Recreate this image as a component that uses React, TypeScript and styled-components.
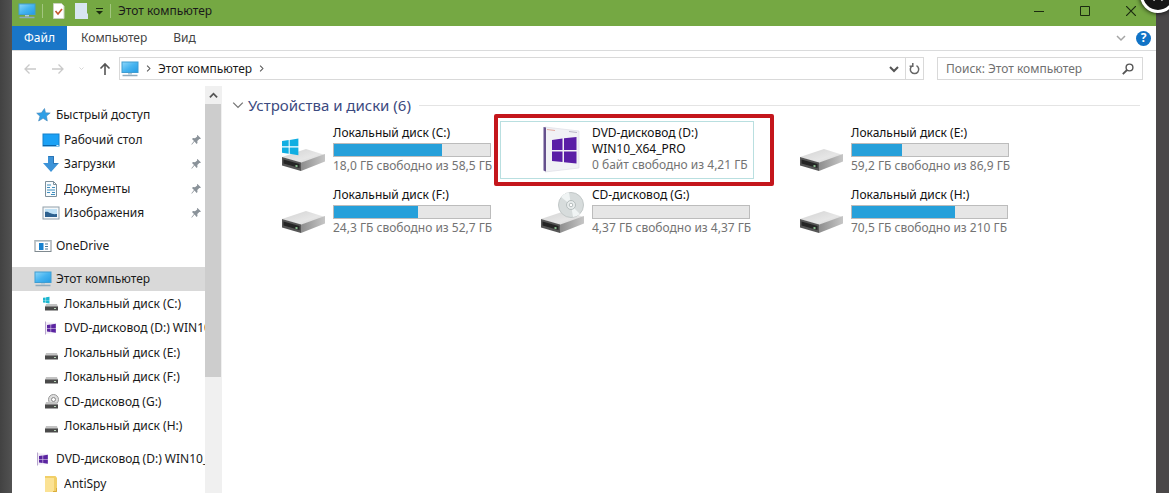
import React from "react";
import styled, { createGlobalStyle } from "styled-components";

const GlobalStyle = createGlobalStyle`
  * { box-sizing: border-box; }
  body {
    margin: 0;
    overflow: hidden;
    background: #484647;
    font: 12px/16px "Noto Sans", "Open Sans", sans-serif;
    color: #1a1a1a;
  }
  button, input { font: inherit; color: inherit; }
  svg { display: block; flex: none; }
`;

const Page = styled.div`
  position: relative;
  height: 100vh;
  padding: 0 13px 0 12px;
  background: linear-gradient(90deg, #424242, #525252 12px, #4a4748 12px);
`;

const Window = styled.div`
  display: flex;
  flex-direction: column;
  height: 100%;
  background: #fff;
`;

const PlainButton = styled.button`
  display: flex;
  align-items: center;
  justify-content: center;
  padding: 0;
  border: 0;
  background: none;
`;

const TitleBar = styled.header`
  display: flex;
  align-items: center;
  flex: none;
  height: 26px;
  padding: 0 2px 4px 6px;
  background: #75a843;
`;

const Divider = styled.span`
  width: 1px;
  height: 14px;
  background: #a3c680;
`;

const QuickTools = styled.div`
  display: flex;
  align-items: center;
  gap: 6px;
`;

const Title = styled.h1`
  flex: 1;
  margin: 0 0 0 7px;
  font-size: 12px;
  font-weight: 400;
`;

const CaptionButton = styled(PlainButton)`
  width: 46px;
  height: 22px;
`;

const Ribbon = styled.nav`
  display: flex;
  align-items: center;
  flex: none;
  height: 25px;
  padding-right: 5px;
  border-bottom: 1px solid #dadbdc;
`;

const FileTab = styled(PlainButton)`
  width: 55px;
  height: 24px;
  background: #1976c8;
  color: #fff;
`;

const Tab = styled(PlainButton)`
  height: 24px;
  padding: 0 12px 0 14px;
  color: #444;
`;

const Spacer = styled.span`
  flex: 1;
`;

const HelpButton = styled(PlainButton)`
  width: 15px;
  height: 15px;
  margin-left: 10px;
  border-radius: 50%;
  background: #1173c6;
  color: #fff;
  font-size: 12px;
  font-weight: 700;
  line-height: 14px;
`;

const AddressRow = styled.div`
  display: flex;
  align-items: center;
  flex: none;
  height: 35px;
  padding: 0 13px 0 11px;
`;

const NavButtons = styled.div`
  display: flex;
  align-items: center;
  gap: 14px;
  padding-right: 7px;
`;

const AddressBar = styled.div`
  display: flex;
  align-items: center;
  flex: 1;
  height: 23px;
  border: 1px solid #d9d9d9;
  padding-left: 1px;
  gap: 6px;
`;

const Refresh = styled(PlainButton)`
  width: 18px;
  height: 21px;
  border-left: 1px solid #d9d9d9;
`;

const SearchBox = styled.label`
  display: flex;
  align-items: center;
  width: 206px;
  height: 23px;
  margin-left: 13px;
  padding: 0 8px;
  border: 1px solid #d9d9d9;
`;

const SearchInput = styled.input`
  flex: 1;
  min-width: 0;
  padding: 0;
  border: 0;
  outline: 0;
  background: none;
  &::placeholder { color: #707070; opacity: 1; }
`;

const Body = styled.div`
  display: flex;
  flex: 1;
  min-height: 0;
`;

const Sidebar = styled.aside`
  display: flex;
  width: 210px;
  flex: none;
  border-right: 1px solid #f0f0f0;
`;

const Tree = styled.div`
  flex: 1;
  min-width: 0;
  padding-top: 17px;
  overflow: hidden;
`;

const Group = styled.ul<{ $height?: number }>`
  display: flex;
  flex-direction: column;
  justify-content: space-between;
  min-height: ${(p) => p.$height ?? 24}px;
  margin: 0 0 9px;
  padding: 0;
  list-style: none;
`;

const TreeRow = styled.li<{ $nested?: boolean; $selected?: boolean }>`
  display: flex;
  align-items: center;
  gap: 4px;
  height: 24px;
  padding-left: ${(p) => (p.$nested ? 30 : 22)}px;
  background: ${(p) => (p.$selected ? "#d9d9d9" : "transparent")};
`;

const TreeLabel = styled.span`
  flex: 1;
  overflow: hidden;
  white-space: nowrap;
`;

const PinSlot = styled.span`
  padding-right: 3px;
`;

const ScrollBar = styled.div`
  display: flex;
  flex-direction: column;
  width: 16px;
  background: #f0f0f0;
`;

const ScrollArrow = styled(PlainButton)`
  height: 18px;
`;

const ScrollThumb = styled.div`
  height: 67%;
  background: #cdcdcd;
`;

const Main = styled.main`
  flex: 1;
  min-width: 0;
  padding: 9px 16px 0 10px;
`;

const SectionHead = styled.div`
  display: flex;
  align-items: center;
  gap: 4px;
  height: 20px;
`;

const SectionTitle = styled.h2`
  margin: 0;
  color: #3c4a80;
  font-size: 15px;
  font-weight: 400;
  line-height: 20px;
`;

const Rule = styled.span`
  flex: 1;
  height: 1px;
  margin-left: 4px;
  background: #e4e4e4;
`;

const DriveGrid = styled.div`
  display: grid;
  grid-template-columns: repeat(auto-fill, 254px);
  gap: 4px 5px;
  padding: 6px 0 0 9px;
`;

const Tile = styled.article<{ $marked?: boolean }>`
  position: relative;
  display: flex;
  gap: 6px;
  height: 58px;
  padding: 3px 4px 0 39px;
  border: 1px solid ${(p) => (p.$marked ? "#b9dfe0" : "transparent")};

  &::after {
    content: "";
    display: ${(p) => (p.$marked ? "block" : "none")};
    position: absolute;
    inset: -8px -21px -8px -7px;
    border: 4px solid #c4161c;
    border-radius: 2px;
  }
`;

const TileText = styled.div`
  width: 158px;
  white-space: nowrap;
`;

const DriveName = styled.h3`
  margin: 0;
  font-size: 12px;
  font-weight: 400;
  line-height: 16px;
  color: #111;
`;

const Meter = styled.div`
  height: 14px;
  margin: 2px 0 1px;
  border: 1px solid #bcbcbc;
  background: #e6e6e6;
`;

const MeterFill = styled.div`
  height: 12px;
  background: #26a0da;
`;

const Space = styled.p`
  margin: 0;
  color: #737373;
`;

const OverlayClose = styled(PlainButton)`
  position: absolute;
  top: -23px;
  right: -7px;
  width: 36px;
  height: 36px;
  border: 3px solid #fff;
  border-radius: 50%;
  background: #151515;
  box-shadow: 0 0 5px #000;
`;

const PcIcon = () => (
  <svg width="18" height="16" viewBox="0 0 18 16">
    <defs>
      <linearGradient id="screen" x1="0" y1="0" x2="1" y2="1">
        <stop offset="0" stopColor="#8fd8fb" />
        <stop offset=".5" stopColor="#46b4f0" />
        <stop offset="1" stopColor="#249be3" />
      </linearGradient>
    </defs>
    <rect x="1" y="1" width="16" height="10.500" fill="url(#screen)" stroke="#3f9dd2" />
    <path d="M7 12h4v1.500H7z" fill="#b7cbd6" />
    <path d="M1.500 14.500h15" stroke="#8eaabc" strokeWidth="1.500" />
  </svg>
);

const Chevron = ({ dir, size = 8, color = "#555", weight = 1.5 }: { dir: "up" | "down" | "right"; size?: number; color?: string; weight?: number }) => {
  const d = { up: "M1 7l4-4 4 4", down: "M1 3l4 4 4-4", right: "M3 1l4 4-4 4" }[dir];
  return (
    <svg width={size} height={size} viewBox="0 0 10 10" fill="none" stroke={color} strokeWidth={weight}>
      <path d={d} />
    </svg>
  );
};

const Arrow = ({ turn = 0, color = "#c9c9c9", weight = 1.3 }: { turn?: number; color?: string; weight?: number }) => (
  <svg width="14" height="14" viewBox="0 0 14 14" fill="none" stroke={color} strokeWidth={weight}>
    <path transform={`rotate(${turn} 7 7)`} d="M13 7H2M6.500 2.500L2 7l4.500 4.500" />
  </svg>
);

const StarIcon = () => (
  <svg width="18" height="16" viewBox="0 0 18 16">
    <path d="M10.500 1.500l1 4.300 4.700.2-3.700 3 .8 5-4.200-2.700L4.600 14l1.400-4.800L2.700 6.200l4.700-.4z" fill="#2f9fe6" stroke="#4586b8" strokeWidth=".6" />
  </svg>
);

const DesktopIcon = () => (
  <svg width="18" height="16" viewBox="0 0 18 16">
    <rect x="1" y="2" width="16" height="12" fill="#1ba1f5" stroke="#1682cb" />
    <path d="M1 13.500h13" stroke="#0b64a8" />
    <path d="M14.500 13.500h2" stroke="#d9f0ff" />
  </svg>
);

const DownloadIcon = () => (
  <svg width="18" height="16" viewBox="0 0 18 16">
    <path d="M6 0h6v7h5l-8 9-8-9h5z" fill="#3c93d8" />
    <path d="M6.500 .5h5v7h4" fill="none" stroke="#2b74b5" />
  </svg>
);

const DocumentIcon = () => (
  <svg width="18" height="16" viewBox="0 0 18 16">
    <path d="M3.500 .5h8l3 3v12h-11z" fill="#f8fbfd" stroke="#7c8f9b" />
    <path d="M5 4h4M5 6.500h3m2 0h3M5 9h8M5 11.500h3m2 0h3M9 13.500h4" stroke="#3f8fc0" strokeWidth="1.200" />
    <path d="M11.500 .5v3h3" fill="none" stroke="#7c8f9b" />
  </svg>
);

const PictureIcon = () => (
  <svg width="18" height="16" viewBox="0 0 18 16">
    <rect x="1" y="2" width="16" height="12" fill="#f5f8fa" stroke="#91a0aa" />
    <rect x="3" y="4" width="12" height="8" fill="#bfe1f6" />
    <path d="M3 7c4-1 5 3 12 2v3H3z" fill="#2d618f" />
  </svg>
);

const OneDriveIcon = () => (
  <svg width="18" height="16" viewBox="0 0 18 16">
    <rect x="1" y="2.500" width="16" height="11" fill="#fff" stroke="#808a90" />
    <path d="M1 3h16" stroke="#b9c3c9" strokeWidth="1.500" />
    <rect x="5" y="5" width="4.500" height="7" fill="#1681cf" />
    <path d="M11 6h3M11 8.500h3M11 11h3" stroke="#4a7794" strokeWidth="1.200" />
  </svg>
);

const winPanes = "M0 1.600L5.300.8v5H0zM6.100.7L13 -.3v6.100H6.100zM0 6.700h5.300v5L0 10.900zM6.100 6.700H13v6.100l-6.900-1z";

const SmallDriveIcon = ({ kind }: { kind?: "system" | "disc" }) => (
  <svg width="18" height="16" viewBox="0 0 18 16">
    {kind === "disc" && (
      <>
        <circle cx="11.500" cy="5.500" r="5" fill="#dedede" stroke="#999" />
        <circle cx="11.500" cy="5.500" r="2" fill="#fff" stroke="#888" />
      </>
    )}
    {kind === "system" && <path transform="translate(1 1) scale(.5)" d={winPanes} fill="#1cb6cf" />}
    <path d="M4 8h11l1 3H3z" fill="#c3c3c3" />
    <path d="M3 10.500h13v4H3z" fill="#4a4a4a" />
    <path d="M12 12.500h2" stroke="#b9d7b9" />
  </svg>
);

const SmallBoxIcon = () => (
  <svg width="18" height="16" viewBox="0 0 18 16">
    <path d="M3 2l11 1v10L3 14z" fill="#f0ebf6" />
    <path d="M3.500 1.500v13" stroke="#b7a6cd" />
    <path transform="translate(5 4) scale(.68)" d={winPanes} fill="#5a24a0" />
  </svg>
);

const FolderIcon = () => (
  <svg width="18" height="16" viewBox="0 0 18 16">
    <path d="M3 0h10.500l1.500 2v14H3z" fill="#f1cf68" />
    <path d="M3 2h9v14H3z" fill="#fbe294" />
    <path d="M14.500 12v3.500H11" fill="none" stroke="#d9ac3b" />
  </svg>
);

const PinIcon = () => (
  <svg width="11" height="12" viewBox="0 0 11 12">
    <path d="M6.500 1L10 4.500l-1 .6-.7-.2-2 2.100.2 2-.9 1L3.500 7.500.8 10.700l-.4-.5L3 7 1 5l1-.9 2 .2L6.200 2.500 5.900 1.600z" fill="#8a9299" />
  </svg>
);

const DriveIcon = ({ kind }: { kind?: "system" | "disc" }) => (
  <svg width="46" height="50" viewBox="0 0 46 50">
    <defs>
      <linearGradient id="lid" x1="0" y1="0" x2="1" y2="1">
        <stop offset="0" stopColor="#d2d2d2" />
        <stop offset=".6" stopColor="#e6e6e6" />
        <stop offset="1" stopColor="#cfcfcf" />
      </linearGradient>
      <linearGradient id="side" x1="0" y1="0" x2="1" y2="0">
        <stop offset="0" stopColor="#8b8b8b" />
        <stop offset="1" stopColor="#c6c6c6" />
      </linearGradient>
    </defs>
    <path d="M1 32L25 24l19 6-24 8z" fill="url(#lid)" />
    <path d="M19 38l25-9v7.500L20 46z" fill="url(#side)" />
    <path d="M1 32l19 5.500V46L1 40.500z" fill="#555" />
    <path d="M2.500 34.500l16 4.500v4L2.500 38.500z" fill="#252525" />
    <path d="M14.500 40.700l2 .6" stroke="#9fe0a5" strokeWidth="1.500" />
    {kind === "system" && <path transform="translate(1 14) scale(1.260)" d={winPanes} fill="#10aee2" />}
    {kind === "disc" && (
      <>
        <circle cx="31" cy="18" r="12.500" fill="#d7dcdc" stroke="#c2c8c8" />
        <path d="M31 18L21 10a13 13 0 0 1 8-4.500zM31 18l9 9a13 13 0 0 1-7 3z" fill="#f0f4f4" />
        <circle cx="31" cy="18" r="4.500" fill="#e9eded" stroke="#b5bdbd" />
        <circle cx="31" cy="18" r="1.800" fill="#fff" stroke="#b5bdbd" />
      </>
    )}
  </svg>
);

const BoxIcon = () => (
  <svg width="46" height="50" viewBox="0 0 46 50">
    <path d="M5 2l34 4v37L5 47z" fill="#f1f1f5" stroke="#dadae2" strokeWidth=".6" />
    <path d="M3.500 2L6 2.500v44l-2.500-1z" fill="#65508d" />
    <path d="M7 4.500l8 1" stroke="#e4a9a0" />
    <path d="M29 6.500l8 1" stroke="#b9b6c6" />
    <path d="M12 15l10.500-1.500v11.500H12zM24 13.300L36.500 12v13H24zM12 26.500h10.500V37L12 36zM24 26.500h12.500V38.500L24 37.200z" fill="#5a1ea6" />
  </svg>
);

type Drive = { name: string; label?: string; free: string; total: string; unit: string; icon: React.ReactNode };

const drives: Drive[] = [
  { name: "Локальный диск (C:)", free: "18,0", total: "58,5", unit: "ГБ", icon: <DriveIcon kind="system" /> },
  { name: "DVD-дисковод (D:)", label: "WIN10_X64_PRO", free: "0", total: "4,21", unit: "байт", icon: <BoxIcon /> },
  { name: "Локальный диск (E:)", free: "59,2", total: "86,9", unit: "ГБ", icon: <DriveIcon /> },
  { name: "Локальный диск (F:)", free: "24,3", total: "52,7", unit: "ГБ", icon: <DriveIcon /> },
  { name: "CD-дисковод (G:)", free: "4,37", total: "4,37", unit: "ГБ", icon: <DriveIcon kind="disc" /> },
  { name: "Локальный диск (H:)", free: "70,5", total: "210", unit: "ГБ", icon: <DriveIcon /> },
];

const toNumber = (value: string) => parseFloat(value.replace(",", "."));

type Node = { text: string; icon: React.ReactNode; top?: boolean; pinned?: boolean; selected?: boolean };

const groups: { height?: number; rows: Node[] }[] = [
  {
    height: 122,
    rows: [
      { text: "Быстрый доступ", icon: <StarIcon />, top: true },
      { text: "Рабочий стол", icon: <DesktopIcon />, pinned: true },
      { text: "Загрузки", icon: <DownloadIcon />, pinned: true },
      { text: "Документы", icon: <DocumentIcon />, pinned: true },
      { text: "Изображения", icon: <PictureIcon />, pinned: true },
    ],
  },
  { rows: [{ text: "OneDrive", icon: <OneDriveIcon />, top: true }] },
  {
    height: 171,
    rows: [
      { text: "Этот компьютер", icon: <PcIcon />, top: true, selected: true },
      { text: "Локальный диск (C:)", icon: <SmallDriveIcon kind="system" /> },
      { text: "DVD-дисковод (D:) WIN10", icon: <SmallBoxIcon /> },
      { text: "Локальный диск (E:)", icon: <SmallDriveIcon /> },
      { text: "Локальный диск (F:)", icon: <SmallDriveIcon /> },
      { text: "CD-дисковод (G:)", icon: <SmallDriveIcon kind="disc" /> },
      { text: "Локальный диск (H:)", icon: <SmallDriveIcon /> },
    ],
  },
  {
    height: 49,
    rows: [
      { text: "DVD-дисковод (D:) WIN10_X", icon: <SmallBoxIcon />, top: true },
      { text: "AntiSpy", icon: <FolderIcon /> },
    ],
  },
];

export default function App() {
  return (
    <Page>
      <GlobalStyle />
      <Window>
        <TitleBar>
          <QuickTools>
            <PcIcon />
            <Divider />
            <PlainButton aria-label="Свойства">
              <svg width="20" height="16" viewBox="0 0 20 16">
                <path d="M4.500 .5h8l2.500 2.500v12.500H4.500z" fill="#fff" stroke="#c9d3c0" />
                <path d="M6.500 8l2.500 3 4-5" fill="none" stroke="#c4572e" strokeWidth="1.600" />
              </svg>
            </PlainButton>
            <PlainButton aria-label="Новая папка">
              <svg width="14" height="16" viewBox="0 0 14 16">
                <path d="M0 0h12v10l1 1v5H0z" fill="#d8e6f2" />
              </svg>
            </PlainButton>
            <PlainButton aria-label="Настройка панели">
              <svg width="9" height="8" viewBox="0 0 9 8">
                <path d="M1 1.500h7" stroke="#1b2b10" />
                <path d="M1 4h7L4.500 7.500z" fill="#1b2b10" />
              </svg>
            </PlainButton>
            <Divider />
          </QuickTools>
          <Title>Этот компьютер</Title>
          <CaptionButton aria-label="Свернуть">
            <svg width="10" height="10" viewBox="0 0 10 10"><path d="M0 5.500h10" stroke="#1b2b10" /></svg>
          </CaptionButton>
          <CaptionButton aria-label="Развернуть">
            <svg width="10" height="10" viewBox="0 0 10 10"><path d="M.5 .5h9v9h-9z" fill="none" stroke="#1b2b10" /></svg>
          </CaptionButton>
          <CaptionButton aria-label="Закрыть">
            <svg width="10" height="10" viewBox="0 0 10 10"><path d="M0 0l10 10M10 0L0 10" stroke="#1b2b10" strokeWidth="1.200" /></svg>
          </CaptionButton>
        </TitleBar>
        <Ribbon>
          <FileTab>Файл</FileTab>
          <Tab>Компьютер</Tab>
          <Tab>Вид</Tab>
          <Spacer />
          <PlainButton aria-label="Развернуть ленту"><Chevron dir="down" size={10} color="#a5a5a5" /></PlainButton>
          <HelpButton>?</HelpButton>
        </Ribbon>
        <AddressRow>
          <NavButtons>
            <PlainButton aria-label="Назад"><Arrow /></PlainButton>
            <PlainButton aria-label="Вперёд"><Arrow turn={180} /></PlainButton>
            <Chevron dir="down" size={5} color="#c9c9c9" />
            <PlainButton aria-label="Вверх"><Arrow turn={90} color="#555" weight={1.6} /></PlainButton>
          </NavButtons>
          <AddressBar>
            <PcIcon />
            <Chevron dir="right" size={7} />
            <span>Этот компьютер</span>
            <Chevron dir="right" size={7} />
            <Spacer />
            <PlainButton aria-label="Предыдущие расположения"><Chevron dir="down" size={10} weight={2} /></PlainButton>
            <Refresh aria-label="Обновить">
              <svg width="11" height="12" viewBox="0 0 11 12" fill="none" stroke="#666" strokeWidth="1.500">
                <path d="M7.500 2.700a4.200 4.200 0 1 1-4.300.2M3.800 0v3.300H.6" />
              </svg>
            </Refresh>
          </AddressBar>
          <SearchBox>
            <SearchInput aria-label="Поиск" placeholder="Поиск: Этот компьютер" />
            <svg width="12" height="12" viewBox="0 0 12 12" fill="none" stroke="#555">
              <circle cx="7.500" cy="4.500" r="3.400" strokeWidth="1.400" />
              <path d="M5 7L.8 11.200" strokeWidth="1.800" />
            </svg>
          </SearchBox>
        </AddressRow>
        <Body>
          <Sidebar>
            <Tree>
              {groups.map((group, i) => (
                <Group key={i} $height={group.height}>
                  {group.rows.map((row) => (
                    <TreeRow key={row.text} $nested={!row.top} $selected={row.selected}>
                      {row.icon}
                      <TreeLabel>{row.text}</TreeLabel>
                      {row.pinned && <PinSlot><PinIcon /></PinSlot>}
                    </TreeRow>
                  ))}
                </Group>
              ))}
            </Tree>
            <ScrollBar>
              <ScrollArrow aria-label="Прокрутить вверх"><Chevron dir="up" size={9} weight={2} /></ScrollArrow>
              <ScrollThumb />
            </ScrollBar>
          </Sidebar>
          <Main>
            <SectionHead>
              <Chevron dir="down" size={12} color="#777" weight={1.1} />
              <SectionTitle>Устройства и диски (6)</SectionTitle>
              <Rule />
            </SectionHead>
            <DriveGrid>
              {drives.map((drive) => (
                <Tile key={drive.name} $marked={!!drive.label}>
                  {drive.icon}
                  <TileText>
                    <DriveName>{drive.name}</DriveName>
                    {drive.label ? (
                      <DriveName>{drive.label}</DriveName>
                    ) : (
                      <Meter>
                        <MeterFill style={{ width: `${(1 - toNumber(drive.free) / toNumber(drive.total)) * 100}%` }} />
                      </Meter>
                    )}
                    <Space>{`${drive.free} ${drive.unit} свободно из ${drive.total} ГБ`}</Space>
                  </TileText>
                </Tile>
              ))}
            </DriveGrid>
          </Main>
        </Body>
      </Window>
      <OverlayClose aria-label="Закрыть просмотр">
        <svg width="14" height="14" viewBox="0 0 14 14"><path d="M2 2l10 10M12 2L2 12" stroke="#fff" strokeWidth="3" /></svg>
      </OverlayClose>
    </Page>
  );
}
